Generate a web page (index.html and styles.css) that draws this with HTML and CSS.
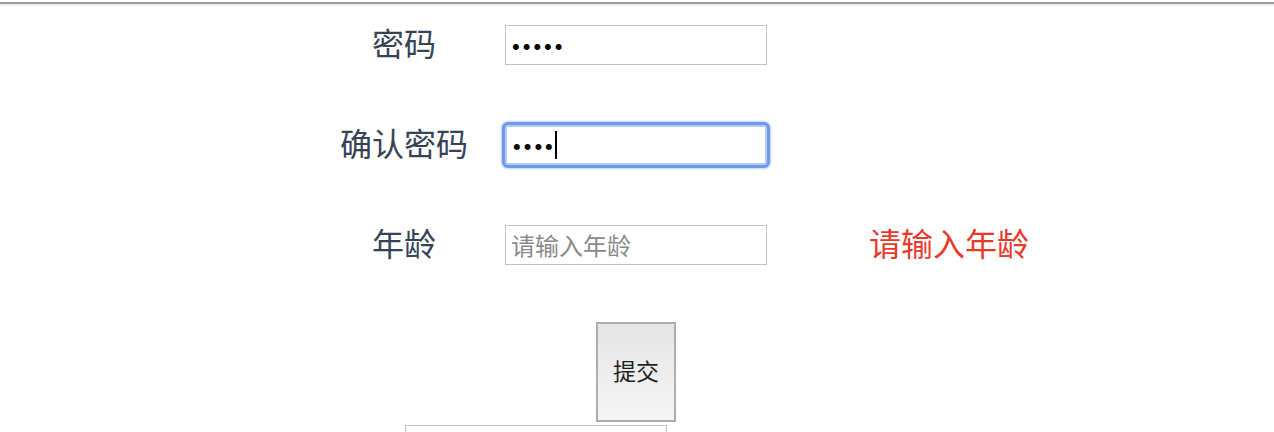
FILE: index.html
```html
<!DOCTYPE html>
<html lang="zh-CN">
<head>
<meta charset="utf-8">
<title>注册</title>
<link rel="stylesheet" href="styles.css">
</head>
<body>
<div class="topbar"></div>
<form class="form">
  <div class="row">
    <label class="label">密码</label>
    <input class="field" type="password" value="12345">
    <span class="error"></span>
  </div>
  <div class="row">
    <label class="label">确认密码</label>
    <div class="field-wrap">
      <input class="field field-focus" type="password" value="1234">
      <span class="caret"></span>
    </div>
    <span class="error"></span>
  </div>
  <div class="row">
    <label class="label">年龄</label>
    <input class="field" type="text" placeholder="请输入年龄">
    <span class="error">请输入年龄</span>
  </div>
  <div class="row row-actions">
    <span class="label"></span>
    <div class="actions"><button class="submit" type="button">提交</button></div>
  </div>
  <div class="extra-row">
    <input class="field" type="text">
  </div>
</form>
</body>
</html>
```

FILE: styles.css
```css
html, body {
  margin: 0;
  padding: 0;
  background: #ffffff;
  font-family: "Noto Sans CJK SC", "Noto Sans", sans-serif;
  overflow: hidden;
}

.topbar {
  margin-top: 2px;
  height: 2px;
  background: #9b9b9b;
  border-bottom: 2px solid #ececec;
}

.form {
  display: flex;
  flex-direction: column;
  padding-top: 19px;
  padding-left: 324px;
}

.row {
  display: grid;
  grid-template-columns: 181px 262px auto;
  grid-template-rows: 40px;
  align-items: center;
  height: 40px;
  margin-bottom: 60px;
}

.label {
  box-sizing: border-box;
  height: 40px;
  padding-right: 21px;
  padding-bottom: 5px;
  text-align: center;
  font-size: 32px;
  line-height: 35px;
  color: #364356;
}

.field {
  box-sizing: border-box;
  width: 262px;
  height: 40px;
  margin: 0;
  padding: 0 5px 2px;
  border: 1px solid #c3c3c3;
  border-radius: 0;
  background: #fff;
  outline: none;
  font-family: "Noto Sans CJK SC", sans-serif;
  font-size: 24px;
  color: #000;
}

.field[type="password"] {
  padding: 3px 6px 0;
  font-family: "Liberation Sans", sans-serif;
  font-size: 22px;
  letter-spacing: 3px;
}

.field::placeholder {
  color: #8a8a8a;
}

.field-wrap {
  position: relative;
  width: 262px;
  height: 40px;
}

.field-focus {
  border: 2px solid #b3cbf6;
  box-shadow: 0 0 0 3px #6e9be9, 0 0 2px 4px rgba(110, 155, 233, 0.45);
  border-radius: 3px;
}

.caret {
  position: absolute;
  left: 50px;
  top: 6px;
  width: 2px;
  height: 28px;
  background: #000;
}

.error {
  box-sizing: border-box;
  height: 40px;
  padding-left: 102px;
  padding-bottom: 5px;
  font-size: 32px;
  line-height: 35px;
  color: #e8392c;
  white-space: nowrap;
}

.row-actions {
  grid-template-rows: 100px;
  height: 100px;
  margin-top: -3px;
  margin-bottom: 3px;
}

.row-actions .label {
  height: auto;
}

.actions {
  display: flex;
  justify-content: center;
}

.submit {
  box-sizing: border-box;
  width: 80px;
  height: 100px;
  padding: 0 0 5px;
  border: 2px solid #adadad;
  background: linear-gradient(#e5e5e5, #f5f5f5);
  font-family: "Noto Sans CJK SC", sans-serif;
  font-size: 23px;
  color: #1e1e1e;
}

.extra-row {
  margin-left: 81px;
}
```
